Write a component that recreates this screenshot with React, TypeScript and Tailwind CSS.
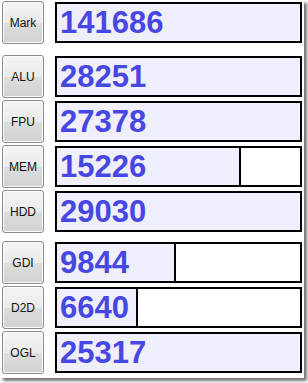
import React from "react";

const groups = [
    [{ name: "Mark", value: 141686, fill: 1 }],
    [
        { name: "ALU", value: 28251, fill: 1 },
        { name: "FPU", value: 27378, fill: 1 },
        { name: "MEM", value: 15226, fill: 0.757 },
        { name: "HDD", value: 29030, fill: 1 },
    ],
    [
        { name: "GDI", value: 9844, fill: 0.49 },
        { name: "D2D", value: 6640, fill: 0.333 },
        { name: "OGL", value: 25317, fill: 1 },
    ],
];

function ScoreRow({ name, value, fill }: { name: string; value: number; fill: number }) {
    return (
        <div className="flex h-[43px] items-center">
            <button className="h-[43px] w-[42px] shrink-0 rounded-[3px] border border-[#8a8a8a] bg-[linear-gradient(#f4f4f4_0%,#ebebeb_50%,#dddddd_51%,#d2d2d2_100%)] pt-[1px] text-[12px] text-[#111] shadow-[inset_0_0_0_1px_#fcfcfc]">
                {name}
            </button>
            <div className="ml-[11px] flex h-[41px] flex-1 border-2 border-black bg-white">
                <div
                    className={`flex h-full items-center bg-[#efeffd] pl-[3px] ${fill < 1 ? "border-r-2 border-black" : ""}`}
                    style={{ width: `${fill * 100}%` }}
                >
                    <span className="text-[31px] leading-none font-bold text-[#4747e4]">
                        {value}
                    </span>
                </div>
            </div>
        </div>
    );
}

export default function App() {
    return (
        <div className="h-[383px] w-[308px] bg-white font-['Liberation_Sans',Arial,sans-serif]">
            <div className="flex h-[378px] w-[304px] flex-col bg-white pl-[2px] pr-[2px] pt-[1px] shadow-[3px_3px_3px_rgba(0,0,0,0.55)]">
                {groups.map((group, gi) => (
                    <div key={gi} className={`flex flex-col gap-[2px] ${gi === 1 ? "mt-[11px]" : gi === 2 ? "mt-[8px]" : ""}`}>
                        {group.map((row) => (
                            <ScoreRow key={row.name} {...row} />
                        ))}
                    </div>
                ))}
            </div>
        </div>
    );
}
